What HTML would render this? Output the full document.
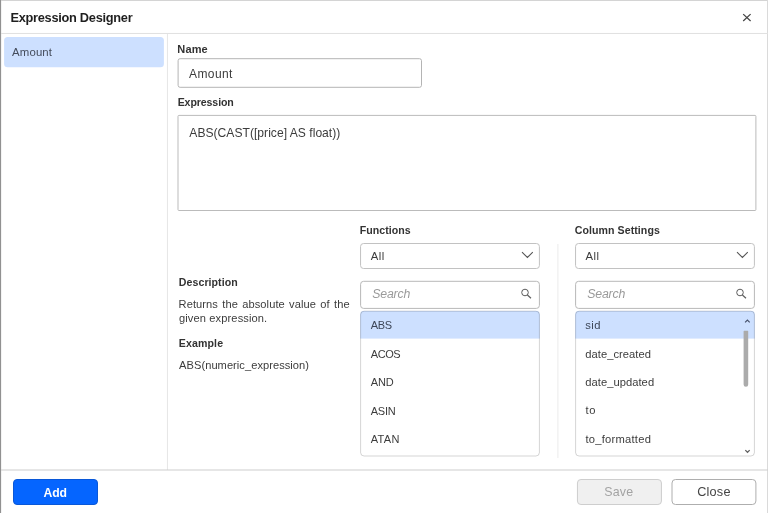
<!DOCTYPE html>
<html lang="en">
<head>
<meta charset="utf-8">
<title>Expression Designer</title>
<style>
*{box-sizing:border-box;margin:0;padding:0}
html,body{width:768px;height:513px;overflow:hidden;background:#fff}
body{font-family:"Liberation Sans",Arial,sans-serif;color:#333;font-size:12px;position:relative}
#geo{position:absolute;left:0;top:0;width:768px;height:513px}
#txt{position:absolute;left:0;top:0;width:768px;height:513px;will-change:transform}
.t{position:absolute;line-height:1;white-space:pre}
</style>
</head>
<body>
<svg id="geo" viewBox="0 0 768 513" fill="none">
<!-- window frame -->
<rect x="0" y="0" width="768" height="1" fill="#d4d4d4"/>
<rect x="0" y="0" width="1" height="513" fill="#919191"/>
<rect x="1" y="1" width="1" height="512" fill="#f3f3f3"/>
<rect x="767" y="0" width="1" height="513" fill="#dadada"/>
<!-- header -->
<line x1="1" y1="33.45" x2="768" y2="33.45" stroke="#e0e0e0"/>
<path d="M743.2 14.1L750.6 21M750.6 14.1L743.2 21" stroke="#444" stroke-width="1.25"/>
<!-- sidebar -->
<rect x="4.1" y="37.1" width="159.8" height="30.2" rx="3.5" fill="#cde0ff"/>
<line x1="167.45" y1="34" x2="167.45" y2="470" stroke="#e6e6e6"/>
<!-- name + expression inputs -->
<rect x="178.1" y="58.7" width="243.4" height="28.6" rx="2" fill="#fff" stroke="#b4b4b4"/>
<rect x="178.0" y="115.4" width="577.9" height="95.1" rx="0.9" fill="#fff" stroke="#bbbbbb"/>
<!-- dropdowns -->
<rect x="360.55" y="243.5" width="178.85" height="25" rx="3" fill="#fff" stroke="#c2c2c2"/>
<rect x="575.55" y="243.5" width="178.85" height="25" rx="3" fill="#fff" stroke="#c2c2c2"/>
<path d="M522 252.1L527.4 257.5L532.8 252.1M737 252.1L742.4 257.5L747.8 252.1" stroke="#555" stroke-width="1.1"/>
<!-- search boxes -->
<rect x="360.6" y="281.3" width="178.8" height="27.1" rx="3" fill="#fff" stroke="#b8b8b8"/>
<rect x="575.6" y="281.3" width="178.8" height="27.1" rx="3" fill="#fff" stroke="#b8b8b8"/>
<g stroke="#5c5c5c" stroke-width="1"><circle cx="525" cy="292.5" r="3.3"/><path d="M527.4 295L531 298.2" stroke-width="1.15"/><circle cx="740" cy="292.5" r="3.3"/><path d="M742.4 295L746 298.2" stroke-width="1.15"/></g>
<!-- lists -->
<clipPath id="c1"><rect x="360.1" y="310.7" width="179.8" height="145.8" rx="4"/></clipPath>
<clipPath id="c2"><rect x="575.1" y="310.7" width="179.8" height="145.8" rx="4"/></clipPath>
<rect x="360.1" y="310.7" width="179.8" height="27.9" fill="#cde0ff" clip-path="url(#c1)"/>
<rect x="575.1" y="310.7" width="179.8" height="27.9" fill="#cde0ff" clip-path="url(#c2)"/>
<rect x="360.6" y="311.2" width="178.8" height="144.8" rx="3.5" stroke="#000" stroke-opacity=".17"/>
<rect x="575.6" y="311.2" width="178.8" height="144.8" rx="3.5" stroke="#000" stroke-opacity=".17"/>
<!-- scrollbar -->
<path d="M743.6 331.3q0-.5 .5-.5h3.6q.5 0 .5 .5v53.2a2.3 2.3 0 0 1-4.6 0z" fill="#ababab"/>
<path d="M745.1 322.4L747.4 320L749.7 322.4" stroke="#46506a" stroke-width="1.15"/>
<path d="M745.3 450.1L747.5 452.3L749.7 450.1" stroke="#606060" stroke-width="1.25"/>
<!-- divider -->
<line x1="557.9" y1="244" x2="557.9" y2="458" stroke="#ebebeb"/>
<!-- footer -->
<line x1="1" y1="470" x2="768" y2="470" stroke="#cdcdcd"/>
<rect x="13.5" y="479.5" width="84" height="25" rx="3.5" fill="#0565ff" stroke="#0a58d8"/>
<rect x="577.45" y="479.5" width="84" height="25" rx="3.5" fill="#f0f0f0" stroke="#cecece"/>
<rect x="672.0" y="479.5" width="83.9" height="25" rx="3.5" fill="#fff" stroke="#aeaeae"/>
</svg>
<div id="txt">
<div class="t" id="t_title" style="left:10.43px;top:12.46px;font-size:12.8px;color:#1f1f1f;letter-spacing:-0.284px;font-weight:bold;">Expression Designer</div>
<div class="t" id="t_side" style="left:12.10px;top:47.05px;font-size:11.4px;color:#444c5c;letter-spacing:0.128px;">Amount</div>
<div class="t" id="t_name" style="left:177.33px;top:44.39px;font-size:11px;color:#333;letter-spacing:0.142px;font-weight:bold;">Name</div>
<div class="t" id="t_amount" style="left:189.10px;top:68.14px;font-size:12px;color:#3c3c3c;letter-spacing:0.374px;">Amount</div>
<div class="t" id="t_expr" style="left:177.63px;top:97.23px;font-size:10.6px;color:#333;letter-spacing:-0.102px;font-weight:bold;">Expression</div>
<div class="t" id="t_exprt" style="left:189.33px;top:126.56px;font-size:12.1px;color:#3c3c3c;letter-spacing:0.017px;">ABS(CAST([price] AS float))</div>
<div class="t" id="t_func" style="left:359.85px;top:225.13px;font-size:10.6px;color:#333;letter-spacing:0.019px;font-weight:bold;">Functions</div>
<div class="t" id="t_col" style="left:574.86px;top:225.23px;font-size:10.6px;color:#333;letter-spacing:0.056px;font-weight:bold;">Column Settings</div>
<div class="t" id="t_all1" style="left:370.74px;top:251.43px;font-size:11.3px;color:#3c3c3c;letter-spacing:0.487px;">All</div>
<div class="t" id="t_all2" style="left:585.57px;top:251.43px;font-size:11.3px;color:#3c3c3c;letter-spacing:0.457px;">All</div>
<div class="t" id="t_s1" style="left:372.20px;top:287.79px;font-size:12.3px;color:#9a9a9a;letter-spacing:-0.157px;font-style:italic;">Search</div>
<div class="t" id="t_s2" style="left:587.20px;top:287.79px;font-size:12.3px;color:#9a9a9a;letter-spacing:-0.157px;font-style:italic;">Search</div>
<div class="t" id="t_f0" style="left:370.81px;top:319.99px;font-size:11px;color:#3d4658;letter-spacing:-0.350px;">ABS</div>
<div class="t" id="t_f1" style="left:370.81px;top:349.39px;font-size:11px;color:#3c3c3c;letter-spacing:-0.473px;">ACOS</div>
<div class="t" id="t_f2" style="left:370.81px;top:376.79px;font-size:11px;color:#3c3c3c;letter-spacing:-0.156px;">AND</div>
<div class="t" id="t_f3" style="left:370.76px;top:406.19px;font-size:11px;color:#3c3c3c;letter-spacing:-0.221px;">ASIN</div>
<div class="t" id="t_f4" style="left:370.76px;top:434.49px;font-size:11px;color:#3c3c3c;letter-spacing:0.315px;">ATAN</div>
<div class="t" id="t_c0" style="left:585.19px;top:319.72px;font-size:11.2px;color:#3d4658;letter-spacing:0.536px;">sid</div>
<div class="t" id="t_c1" style="left:585.23px;top:349.12px;font-size:11.2px;color:#3c3c3c;letter-spacing:0.040px;">date_created</div>
<div class="t" id="t_c2" style="left:585.32px;top:376.52px;font-size:11.2px;color:#3c3c3c;letter-spacing:0.032px;">date_updated</div>
<div class="t" id="t_c3" style="left:585.50px;top:404.92px;font-size:11.2px;color:#3c3c3c;letter-spacing:0.682px;">to</div>
<div class="t" id="t_c4" style="left:585.50px;top:434.42px;font-size:11.2px;color:#3c3c3c;letter-spacing:0.233px;">to_formatted</div>
<div class="t" id="t_desc" style="left:178.85px;top:277.13px;font-size:10.6px;color:#333;letter-spacing:0.057px;font-weight:bold;">Description</div>
<div class="t" id="t_d1" style="left:178.59px;top:299.10px;font-size:11.1px;color:#3c3c3c;letter-spacing:0.080px;word-spacing:1.125px;">Returns the absolute value of the</div>
<div class="t" id="t_d2" style="left:178.97px;top:312.60px;font-size:11.1px;color:#3c3c3c;letter-spacing:0.119px;">given expression.</div>
<div class="t" id="t_ex" style="left:178.85px;top:338.13px;font-size:10.6px;color:#333;letter-spacing:0.102px;font-weight:bold;">Example</div>
<div class="t" id="t_ext" style="left:179.11px;top:360.40px;font-size:11.1px;color:#3c3c3c;letter-spacing:0.046px;">ABS(numeric_expression)</div>
<div class="t" id="t_add" style="left:43.45px;top:487.17px;font-size:12.2px;color:#fff;letter-spacing:-0.048px;font-weight:bold;">Add</div>
<div class="t" id="t_save" style="left:604.15px;top:486.00px;font-size:12.4px;color:#a3a3a3;letter-spacing:0.249px;">Save</div>
<div class="t" id="t_close" style="left:697.13px;top:485.85px;font-size:12.7px;color:#444;letter-spacing:0.221px;">Close</div>
</div>
</body>
</html>
